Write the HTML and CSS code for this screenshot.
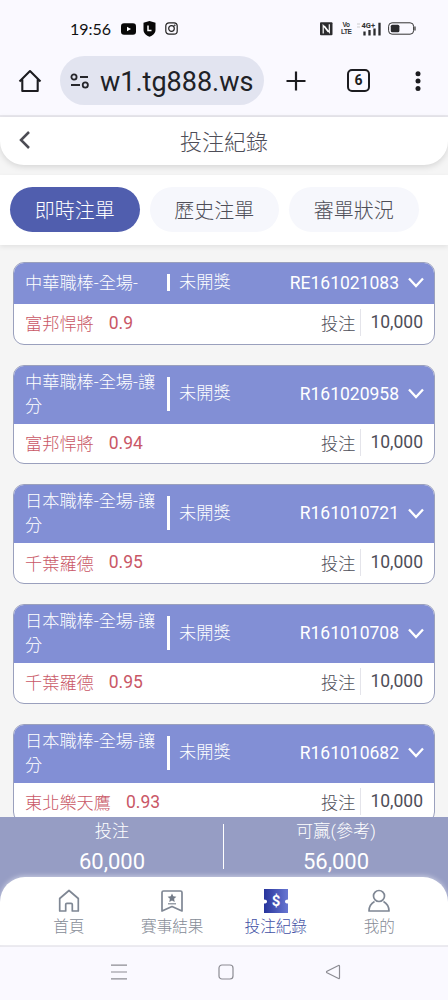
FILE: index.html
```html
<!DOCTYPE html>
<html lang="zh-Hant">
<head>
    <meta charset="UTF-8" />
    <meta name="viewport" content="width=device-width, initial-scale=1.0"/>
    <title>投注紀錄</title>
    <link rel="stylesheet" href="styles.css">
</head>
<body>
    <!-- STATUS BAR -->
    <div class="status-bar">
        <span class="time">19:56</span>
        <svg class="youtube" width="15" height="12" viewBox="0 0 15 12"><rect width="15" height="11.5" y=".3" rx="3" fill="#080808"/><path d="M6 3.7v4.6L10 6z" fill="#fff"/></svg>
        <svg class="shield" width="13" height="16" viewBox="0 0 13 16"><path d="M6.500 0 12.500 1.800V9c0 3.500-3 5.500-6 6.700C3.500 14.500.5 12.500.5 9V1.800z" fill="#080808"/><path d="M5 4.500v5h3.500" fill="none" stroke="#fff" stroke-width="1.500"/></svg>
        <svg class="insta" width="13" height="13" viewBox="0 0 13 13" fill="none" stroke="#222" stroke-width="1.200"><rect x=".8" y=".8" width="11.400" height="11.400" rx="3.200"/><circle cx="6.500" cy="6.500" r="2.800"/><circle cx="9.700" cy="3.300" r=".3"/></svg>
        <div class="signals">
            <svg width="13" height="14" viewBox="0 0 13 14"><rect width="12.500" height="13" y=".3" rx="1" fill="#2b2b2e"/><path d="M3.200 11.500v-8l5 6.500M9.300 2.300v8l-5-6.500" fill="none" stroke="#fff" stroke-width="1.200"/></svg>
            <div class="volte"><span>Vo</span><span>LTE</span></div>
            <svg class="bars" width="25" height="14" viewBox="0 0 25 14"><path d="M0 2h3M0 5h3" stroke="#ccc" stroke-width="1"/><text x="4.500" y="6" class="gen">4G+</text><path d="M7.500 9.500V13.500M12.500 8V13.500M17.500 6.500V13.500M22.500 .8V13.500" stroke="#2b2b2e" stroke-width="2.300"/></svg>
            <svg width="28" height="13" viewBox="0 0 28 13"><rect x=".6" y=".8" width="25" height="11.400" rx="3.500" fill="none" stroke="#333"/><rect x="2.800" y="2.700" width="8.600" height="7.600" rx="1.500" fill="#2b2b2e"/><path d="M27 4.500v4" stroke="#333" stroke-width="1.200"/></svg>
        </div>
    </div>

    <!-- BROWSER BAR -->
    <div class="browser-bar">
        <svg class="home" width="24" height="24" viewBox="0 0 24 24" fill="none" stroke="#1c1c20" stroke-width="2.100"><path d="M1.500 12.500 12 2l10.500 10.500M4.300 10.500V22h15.400V10.500" stroke-linejoin="round"/></svg>
        <div class="url">
            <svg width="20" height="16" viewBox="0 0 20 16" fill="none" stroke="#26262b" stroke-width="1.800"><circle cx="4" cy="4" r="2.600"/><path d="M10 4h8M1 12h9"/><circle cx="15.300" cy="12" r="2.600"/></svg>
            <span>w1.tg888.ws</span>
        </div>
        <svg class="plus" width="20" height="20" viewBox="0 0 20 20"><path d="M10 .5v19M.5 10h19" stroke="#1c1c20" stroke-width="2.200"/></svg>
        <div class="tab-count">6</div>
        <svg class="dots" width="6" height="20" viewBox="0 0 6 20" fill="#1c1c20"><circle cx="3" cy="2.700" r="2.500"/><circle cx="3" cy="10" r="2.500"/><circle cx="3" cy="17.400" r="2.500"/></svg>
    </div>

    <!-- PAGE HEADER -->
    <div class="header">
        <svg class="back" width="12" height="20" viewBox="0 0 12 20"><path d="M10 2 2 10l8 8" fill="none" stroke="#4c4c54" stroke-width="2.500"/></svg>
        <h1>投注紀錄</h1>
    </div>

    <div class="tabs">
        <button class="tab active">即時注單</button>
        <button class="tab">歷史注單</button>
        <button class="tab">審單狀況</button>
    </div>

    <!-- BET CARDS -->
    <div class="list" id="list"></div>

    <!-- TOTALS + MENU -->
    <div class="bottom">
        <div class="totals">
            <div class="total"><span>投注</span><b>60,000</b></div>
            <div class="total"><span>可贏(參考)</span><b>56,000</b></div>
        </div>
        <nav class="menu">
            <a>
                <svg width="24" height="24" viewBox="0 0 24 24" fill="none" stroke="#7f8794" stroke-width="1.700" stroke-linejoin="round"><path d="M2.700 9.500 12 1.500l9.300 8V22h-6v-6.500c0-.8-.4-1.200-1.200-1.200H9.900c-.8 0-1.200.4-1.200 1.200V22h-6z"/></svg>
                <span>首頁</span>
            </a>
            <a>
                <svg width="24" height="24" viewBox="0 0 24 24" fill="none" stroke="#7f8794" stroke-width="1.700" stroke-linejoin="round"><path d="M2 3.500Q2 2 3.500 2h17Q22 2 22 3.500V22l-10-4.500L2 22z"/><path d="m12 4.500 1.300 2.800 3.100.4-2.300 2.100.6 3.100-2.700-1.500-2.700 1.500.6-3.100-2.300-2.100 3.100-.4z" fill="#737b88" stroke="none"/><path d="M8 14.800h8" stroke-width="1.200"/></svg>
                <span>賽事結果</span>
            </a>
            <a class="current">
                <svg width="24" height="24" viewBox="0 0 24 24"><defs><linearGradient id="ticket"><stop offset="0" stop-color="#27349c"/><stop offset="1" stop-color="#6877d2"/></linearGradient></defs><path d="M0 0h24v10.500q-3 0-3 2t3 2V24H0v-9.500q3 0 3-2t-3-2z" fill="url(#ticket)"/><text x="12" y="17.300" class="dollar">$</text></svg>
                <span>投注紀錄</span>
            </a>
            <a>
                <svg width="24" height="24" viewBox="0 0 24 24" fill="none" stroke="#7f8794" stroke-width="1.700" stroke-linejoin="round"><circle cx="12" cy="7" r="5.500"/><path d="M7.500 12.500C4 14.500 2 17.500 2 22h20c0-4.500-2-7.500-5.500-9.500"/></svg>
                <span>我的</span>
            </a>
        </nav>
    </div>

    <!-- ANDROID KEYS -->
    <div class="system-nav">
        <svg width="16" height="16" viewBox="0 0 16 16"><path d="M0 1.200h16M0 8h16M0 14.800h16" stroke="#8c8c93" stroke-width="1.200"/></svg>
        <svg width="16" height="16" viewBox="0 0 16 16"><rect x="1" y="1" width="14" height="14" rx="3" fill="none" stroke="#8c8c93" stroke-width="1.200"/></svg>
        <svg width="16" height="16" viewBox="0 0 16 16"><path d="M13.500 1.500 2 7.300q-1 .7 0 1.400l11.500 5.800q1 .3 1-.8V2.300q0-1.100-1-.8z" fill="none" stroke="#8c8c93" stroke-width="1.200"/></svg>
    </div>

    <script>
        const bets = [
            { title: "中華職棒-全場-", id: "RE161021083", team: "富邦悍將", odds: "0.9" },
            { title: "中華職棒-全場-讓分", id: "R161020958", team: "富邦悍將", odds: "0.94" },
            { title: "日本職棒-全場-讓分", id: "R161010721", team: "千葉羅德", odds: "0.95" },
            { title: "日本職棒-全場-讓分", id: "R161010708", team: "千葉羅德", odds: "0.95" },
            { title: "日本職棒-全場-讓分", id: "R161010682", team: "東北樂天鷹", odds: "0.93" }
        ];

        const list = document.getElementById('list');
        bets.forEach(bet => {
            const card = document.createElement('div');
            card.className = 'card';
            card.innerHTML = `
                <div class="card-head">
                    <div class="title">${bet.title}</div>
                    <div class="status">未開獎</div>
                    <div class="number">${bet.id}</div>
                    <svg width="16" height="11" viewBox="0 0 16 11"><path d="m1 1.500 7 7.500 7-7.500" fill="none" stroke="#fff" stroke-width="2.300"/></svg>
                </div>
                <div class="card-body">
                    <span class="team">${bet.team}</span>
                    <span class="odds">${bet.odds}</span>
                    <span class="label">投注</span>
                    <span class="amount">10,000</span>
                </div>
            `;
            list.appendChild(card);
        });
    </script>
</body>
</html>
```
FILE: styles.css
```css
* {
    margin: 0;
    padding: 0;
    box-sizing: border-box;
}

body {
    display: flex;
    flex-direction: column;
    height: 1000px;
    overflow: hidden;
    background: #f5f5f5;
    color: #4e4e58;
    font-family: Roboto, "Noto Sans CJK TC", sans-serif;
    font-weight: 300;
}

svg {
    display: block;
    flex-shrink: 0;
}

.status-bar {
    display: flex;
    align-items: center;
    height: 56px;
    padding: 1px 32px 0 70px;
    background: #faf9ff;
}

.time {
    width: 51px;
    padding-bottom: 1px;
    font-family: Lato, sans-serif;
    font-size: 16px;
    font-weight: 400;
    color: #111;
}

.shield {
    margin-left: 7px;
}

.insta {
    margin-left: 9px;
}

.signals {
    display: flex;
    align-items: center;
    margin-left: auto;
}

.volte {
    display: flex;
    flex-direction: column;
    width: 10px;
    margin: 0 6px 0 8px;
    font-family: "Liberation Sans", sans-serif;
    font-size: 6.5px;
    line-height: 6.5px;
    font-weight: bold;
    letter-spacing: -0.5px;
    text-align: center;
    color: #333;
}

.bars {
    margin-right: 6px;
}

.gen {
    font-size: 7.500px;
    font-weight: bold;
    fill: #333;
}

.browser-bar {
    display: flex;
    align-items: center;
    height: 61px;
    padding: 0 27px 10px 18px;
    background: #faf9ff;
    border-bottom: 2px solid #e9e8ee;
}

.url {
    display: flex;
    flex-shrink: 0;
    align-items: center;
    width: 204px;
    height: 49px;
    margin: 0 22px 0 18px;
    padding-left: 10px;
    border-radius: 25px;
    background: #e2e4f0;
}

.url span {
    margin: 2px 0 0 10px;
    font-size: 27px;
    font-weight: 400;
    color: #202126;
}

.tab-count {
    flex-shrink: 0;
    width: 23px;
    height: 23px;
    margin-left: 41px;
    border: 2px solid #1c1c20;
    border-radius: 5px;
    font-size: 14px;
    line-height: 19px;
    font-weight: bold;
    text-align: center;
    color: #1c1c20;
}

.dots {
    margin-left: auto;
}

.header {
    display: flex;
    align-items: center;
    height: 48px;
    padding: 0 19px 2px;
    background: white;
    border-radius: 0 0 24px 24px;
    box-shadow: 0 2px 6px rgba(0, 0, 0, 0.13);
}

.header h1 {
    flex: 1;
    margin-right: 12px;
    padding-bottom: 1px;
    font-size: 22px;
    font-weight: 300;
    text-align: center;
}

.tabs {
    display: flex;
    gap: 10px;
    height: 70px;
    margin-top: 10px;
    padding: 12px 10px;
    background: white;
    box-shadow: 0 2px 5px rgba(0, 0, 0, 0.08);
}

.tab {
    width: 129.500px;
    height: 45px;
    border: none;
    border-radius: 23px;
    background: #f6f7fc;
    color: #4e4e58;
    font-family: inherit;
    font-size: 20px;
    font-weight: 300;
}

.tab.active {
    background: #505eae;
    color: white;
}

.list {
    flex: 1;
    min-height: 0;
    overflow: hidden;
    padding: 17px 13px 0;
}

.card {
    margin-bottom: 20px;
    border: 1.500px solid #9aa0bd;
    border-radius: 11px;
    background: white;
    overflow: hidden;
    font-size: 17.200px;
}

.card-head {
    display: flex;
    align-items: center;
    min-height: 41px;
    padding: 4px 10px 6px 11px;
    background: #828fd5;
    color: white;
}

.title {
    width: 142px;
    line-height: 24px;
}

/* white bar grows with the title height */
.status {
    display: flex;
    align-items: center;
    align-self: stretch;
    margin: 7px 0;
    padding-left: 9px;
    border-left: 3px solid white;
    line-height: 17px;
}

.number {
    margin: 0 9px 0 auto;
    font-size: 17.500px;
    font-weight: 400;
}

.card-body {
    display: flex;
    align-items: center;
    height: 39.700px;
    padding: 0 11px 2px 11px;
}

.team, .odds {
    color: #c95766;
}

.odds {
    margin-left: 15px;
    font-size: 17.500px;
    font-weight: 400;
}

.label {
    margin-left: auto;
}

.amount {
    margin-left: 5px;
    padding-left: 9px;
    border-left: 1px solid #e4e4ea;
    font-size: 17.500px;
    line-height: 27px;
    font-weight: 400;
}

.bottom {
    background: #969dc4;
    z-index: 1;
}

.totals {
    display: flex;
    height: 60px;
    color: white;
}

.total {
    display: flex;
    flex: 1;
    flex-direction: column;
    align-items: center;
    height: 45px;
    margin-top: 7px;
    font-size: 17.200px;
    line-height: 15px;
}

.total + .total {
    margin-left: -1px;
    border-left: 1px solid white;
}

.total b {
    margin-top: 8px;
    font-size: 22px;
    line-height: 29px;
    font-weight: 400;
}

.menu {
    display: flex;
    height: 68px;
    padding: 12px 17px 0;
    border-radius: 25px 25px 0 0;
    background: white;
    box-shadow: 0 -1px 5px rgba(255, 255, 255, 0.5);
}

.menu a {
    display: flex;
    flex: 1;
    flex-direction: column;
    align-items: center;
    font-size: 15.600px;
    line-height: 28px;
    color: #858b96;
}

.menu .current {
    color: #4351a5;
}

.dollar {
    font-size: 15px;
    font-weight: bold;
    text-anchor: middle;
    fill: white;
}

.system-nav {
    display: flex;
    justify-content: center;
    gap: 91px;
    height: 55px;
    padding: 17px 0 0 3px;
    border-top: 2px solid #e9e8ee;
    background: #faf9ff;
}
```
